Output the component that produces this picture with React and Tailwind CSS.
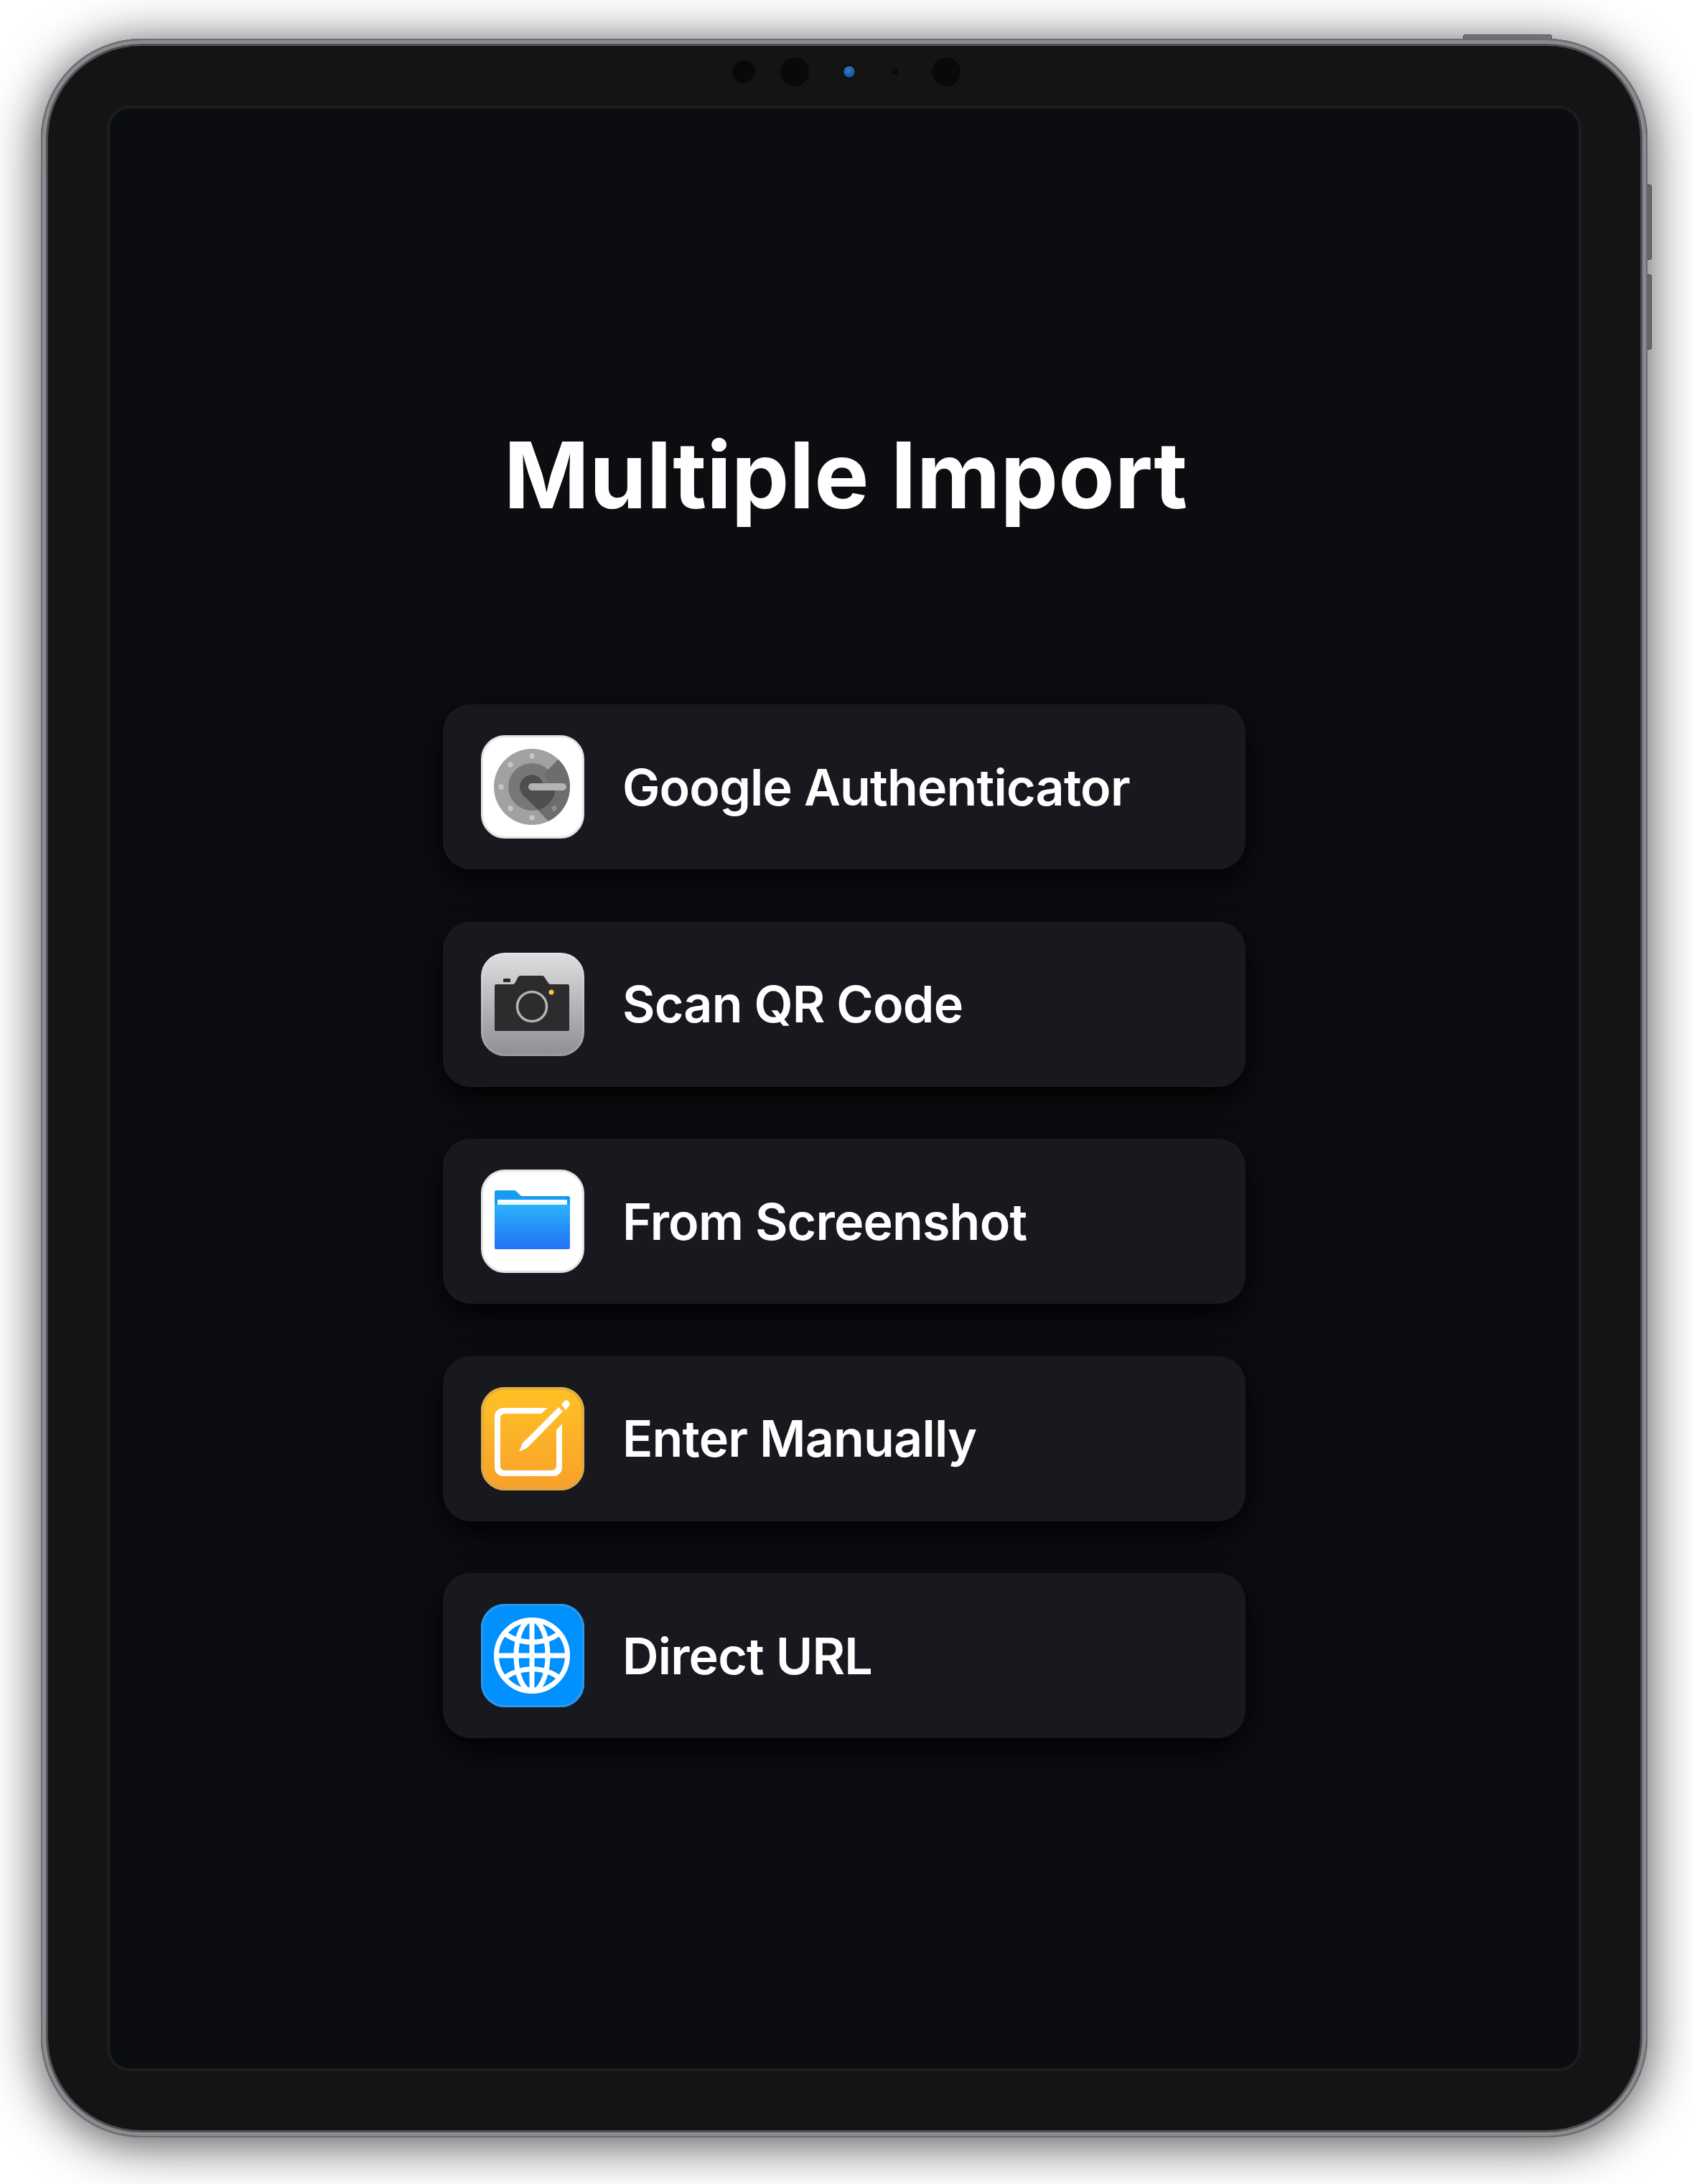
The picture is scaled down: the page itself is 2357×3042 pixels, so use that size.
const imports = [
  { label: 'Google Authenticator', icon: <GoogleIcon /> },
  { label: 'Scan QR Code', icon: <CameraIcon /> },
  { label: 'From Screenshot', icon: <FilesIcon /> },
  { label: 'Enter Manually', icon: <NotesIcon /> },
  { label: 'Direct URL', icon: <GlobeIcon /> },
]

function GoogleIcon() {
  return (
    <svg viewBox="0 0 144 144" className="block w-[144px] h-[144px]">
      <defs>
        <clipPath id="dial"><circle cx="71" cy="72" r="53" /></clipPath>
      </defs>
      <rect x="1.5" y="1.5" width="141" height="141" rx="32" fill="#fff" stroke="#e4e4e4" strokeWidth="3" />
      <circle cx="71" cy="72" r="53" fill="#a1a1a1" />
      <circle cx="71" cy="72" r="33" fill="#777" />
      <g clipPath="url(#dial)">
        <path d="M107 34L88 54L94 66L60 84L94 120L130 120L130 34Z" fill="#6d6d6d" />
      </g>
      <path d="M71 55A17 17 0 0 0 59 84L80 104A33 33 0 0 0 104 72L86 66A17 17 0 0 0 71 55Z" fill="#4e4e4e" />
      <rect x="66" y="67" width="53" height="10" rx="5" fill="#b3b3b3" />
      <circle cx="71" cy="29" r="3.7" fill="#c6c6c6" />
      <circle cx="41" cy="41" r="3.7" fill="#c6c6c6" />
      <circle cx="28" cy="72" r="3.7" fill="#c6c6c6" />
      <circle cx="41" cy="102" r="3.7" fill="#c6c6c6" />
      <circle cx="71" cy="115" r="3.7" fill="#c6c6c6" />
      <circle cx="102" cy="102" r="3.7" fill="#8d8d8d" />
    </svg>
  )
}

function CameraIcon() {
  return (
    <svg viewBox="0 0 144 144" className="block w-[144px] h-[144px]">
      <defs>
        <linearGradient id="steel" x1="0" y1="0" x2="0" y2="1">
          <stop offset="0" stopColor="#dfdfe1" />
          <stop offset="1" stopColor="#8e8e93" />
        </linearGradient>
      </defs>
      <rect width="144" height="144" rx="33" fill="url(#steel)" />
      <rect x="1.5" y="1.5" width="141" height="141" rx="32" fill="none" stroke="#fff" strokeOpacity="0.12" strokeWidth="3" />
      <path d="M21 44H44C46 44 47 43 48 41L51 35C52 33 53 32 56 32H85C87 32 88 33 89 35L93 41C94 43 95 44 97 44H121C122 44 123 45 123 46V107C123 108 122 109 121 109H21C20 109 19 108 19 107V46C19 45 20 44 21 44Z" fill="#2c2c2e" />
      <rect x="31" y="36" width="10" height="5" rx="1" fill="#2c2c2e" />
      <circle cx="71" cy="75" r="20.5" fill="none" stroke="#b4b4b6" strokeWidth="3.5" />
      <circle cx="98" cy="55" r="3.5" fill="#f5c93f" />
    </svg>
  )
}

function FilesIcon() {
  return (
    <svg viewBox="0 0 144 144" className="block w-[144px] h-[144px]">
      <defs>
        <linearGradient id="folder" x1="0" y1="0" x2="0" y2="1">
          <stop offset="0" stopColor="#2bb2fb" />
          <stop offset="1" stopColor="#2172f5" />
        </linearGradient>
      </defs>
      <rect x="1.5" y="1.5" width="141" height="141" rx="32" fill="#fff" stroke="#e4e4e4" strokeWidth="3" />
      <path d="M21 29H46C48 29 49 30 50 31L54 35C55 36 56 37 58 37H122C123 37 124 38 124 39V50H19V31C19 30 20 29 21 29Z" fill="#169bf3" />
      <rect x="23" y="42" width="97" height="8" fill="#f2fbff" />
      <path d="M19 49H124V109C124 110 123 111 122 111H21C20 111 19 110 19 109Z" fill="url(#folder)" />
    </svg>
  )
}

function NotesIcon() {
  return (
    <svg viewBox="0 0 144 144" className="block w-[144px] h-[144px]">
      <defs>
        <linearGradient id="notes" x1="0" y1="0" x2="0" y2="1">
          <stop offset="0" stopColor="#ffc225" />
          <stop offset="1" stopColor="#f9a02b" />
        </linearGradient>
      </defs>
      <rect width="144" height="144" rx="33" fill="url(#notes)" />
      <rect x="2" y="2" width="140" height="140" rx="31" fill="none" stroke="#d9a84a" strokeOpacity="0.8" strokeWidth="4" />
      <path d="M93 29H31A12 12 0 0 0 19 41V112A12 12 0 0 0 31 124H101A12 12 0 0 0 113 112V51L105 60V110A6 6 0 0 1 99 116H33A6 6 0 0 1 27 110V43A6 6 0 0 1 33 37H84Z" fill="#fff" />
      <path d="M53 90L58 78L108 28L114 34L64 85Z" fill="#fff" />
      <path d="M112 24L117 19C118 18 120 18 121 19L123 21C124 23 124 25 123 26L118 32Z" fill="#fff" />
    </svg>
  )
}

function GlobeIcon() {
  return (
    <svg viewBox="0 0 144 144" className="block w-[144px] h-[144px]">
      <rect width="144" height="144" rx="33" fill="#0091ff" />
      <rect x="1.5" y="1.5" width="141" height="141" rx="32" fill="none" stroke="#2a98ec" strokeWidth="3" />
      <g fill="none" stroke="#fff">
        <circle cx="71" cy="72" r="49.5" strokeWidth="7" />
        <ellipse cx="71" cy="72" rx="22" ry="49.5" strokeWidth="7" />
        <path d="M71 23V121M22 72H120" strokeWidth="7" />
        <path d="M34 42C56 57 86 57 108 42M34 102C56 87 86 87 108 102" strokeWidth="7" />
      </g>
    </svg>
  )
}

function App() {
  return (
    <div className="w-[2357px] h-[3042px] bg-white pt-[54px] pl-[57px] overflow-hidden">
      <div className="relative w-[2238px] h-[2923px]">
        {/* hardware buttons sit behind the frame */}
        <div className="absolute left-[1981px] top-[-6px] w-[124px] h-[12px] rounded-t-[3px] bg-[#9a9aa0] border border-[#6e6e72]" />
        <div className="absolute right-[-6px] top-[203px] w-[12px] h-[105px] rounded-r-[3px] bg-[#9a9aa0] border border-[#6e6e72]" />
        <div className="absolute right-[-6px] top-[328px] w-[12px] h-[105px] rounded-r-[3px] bg-[#9a9aa0] border border-[#6e6e72]" />

        <div className="relative w-full h-full rounded-[140px] bg-[#141414] pt-[93px] px-[92px] pb-[92px] shadow-[inset_0_0_0_2px_#6c6c70,inset_0_0_0_7px_#8b8b91,inset_0_0_0_10px_#505054,0_8px_70px_rgba(0,0,0,0.72)]">
          {/* camera array */}
          <div className="absolute top-[26px] left-[963px] flex items-center h-[40px]">
            <div className="w-[32px] h-[32px] rounded-full bg-[#090909]" />
            <div className="ml-[35px] w-[40px] h-[40px] rounded-full bg-[#090909]" />
            <div className="ml-[48px] w-[16px] h-[16px] rounded-full bg-[radial-gradient(circle_at_45%_40%,#2f7fd0,#123a6e)] shadow-[0_0_0_2px_#0a0a0a]" />
            <div className="ml-[52px] w-[8px] h-[8px] rounded-full bg-[#090909]" />
            <div className="ml-[47px] w-[40px] h-[40px] rounded-full bg-[#090909]" />
          </div>

          <div className="w-full h-full rounded-[32px] border-[4px] border-[#1a1e20] bg-[#0c0d11] flex flex-col items-center text-white">
            <h1 className="mt-[422px] ml-[4px] text-[128px] leading-[177px] font-bold font-['Inter',sans-serif]">Multiple Import</h1>
            <div className="mt-[231px] flex flex-col gap-[72.6px]">
              {imports.map((item) => (
                <div key={item.label} className="w-[1118px] h-[230px] rounded-[38px] bg-[#18191e] flex items-center pl-[53px] gap-[53px] shadow-[0_16px_40px_rgba(0,0,0,0.9)]">
                  {item.icon}
                  <span className="text-[70px] font-semibold tracking-[-0.012em] font-['Inter',sans-serif]">{item.label}</span>
                </div>
              ))}
            </div>
          </div>
        </div>
      </div>
    </div>
  )
}

export default App
